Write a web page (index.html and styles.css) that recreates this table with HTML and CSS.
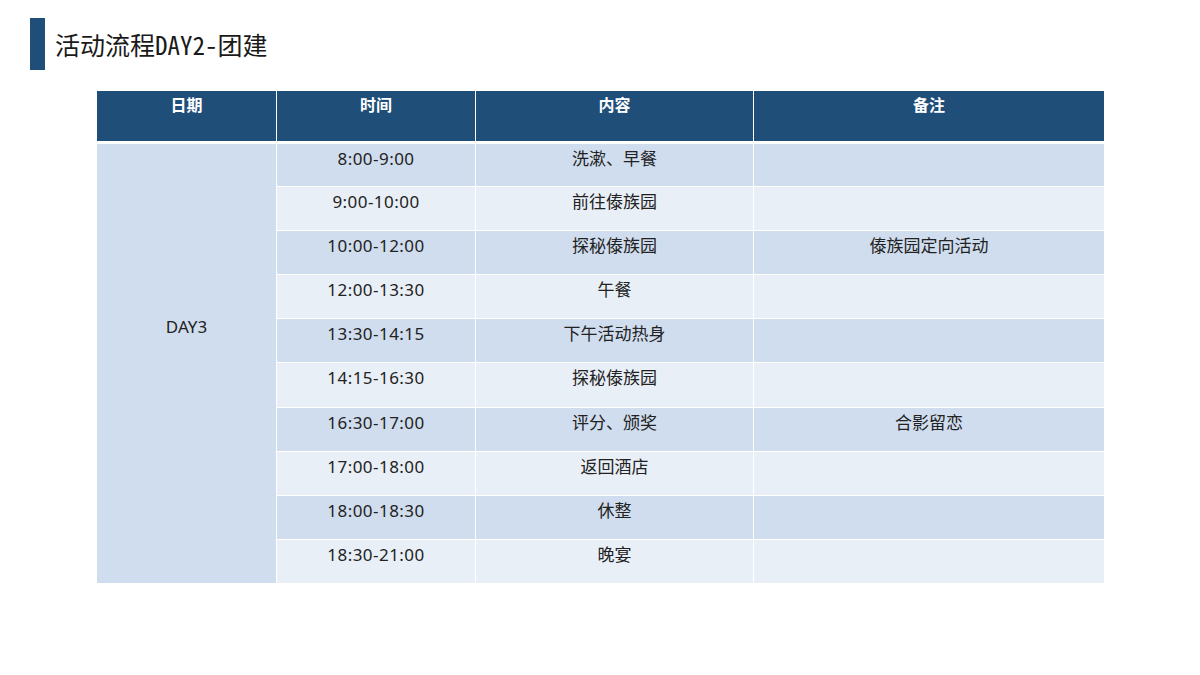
FILE: index.html
```html
<!DOCTYPE html>
<html lang="zh-CN">
<head>
<meta charset="utf-8">
<title>活动流程DAY2-团建</title>
<link rel="stylesheet" href="styles.css">
</head>
<body>
<div class="page">
  <header class="title-row">
    <div class="title-bar"></div>
    <h1 class="title">活动流程DAY2-团建</h1>
  </header>
  <table class="schedule">
    <colgroup>
      <col class="c1"><col class="c2"><col class="c3"><col class="c4">
    </colgroup>
    <thead>
      <tr><th>日期</th><th>时间</th><th>内容</th><th>备注</th></tr>
    </thead>
    <tbody>
      <tr class="odd"><td class="day" rowspan="10">DAY3</td><td class="time">8:00-9:00</td><td>洗漱、早餐</td><td></td></tr>
      <tr class="even"><td class="time">9:00-10:00</td><td>前往傣族园</td><td></td></tr>
      <tr class="odd"><td class="time">10:00-12:00</td><td>探秘傣族园</td><td>傣族园定向活动</td></tr>
      <tr class="even"><td class="time">12:00-13:30</td><td>午餐</td><td></td></tr>
      <tr class="odd"><td class="time">13:30-14:15</td><td>下午活动热身</td><td></td></tr>
      <tr class="even"><td class="time">14:15-16:30</td><td>探秘傣族园</td><td></td></tr>
      <tr class="odd"><td class="time">16:30-17:00</td><td>评分、颁奖</td><td>合影留恋</td></tr>
      <tr class="even"><td class="time">17:00-18:00</td><td>返回酒店</td><td></td></tr>
      <tr class="odd"><td class="time">18:00-18:30</td><td>休整</td><td></td></tr>
      <tr class="even"><td class="time">18:30-21:00</td><td>晚宴</td><td></td></tr>
    </tbody>
  </table>
</div>
</body>
</html>
```
FILE: styles.css
```css
* { box-sizing: border-box; }
html, body { margin: 0; padding: 0; background: #ffffff; }
body {
  width: 1200px;
  height: 675px;
  overflow: hidden;
  font-family: "Noto Sans", "Noto Sans CJK SC", sans-serif;
  color: #222222;
}
.page { padding: 18px 0 0 0; }
.title-row {
  display: flex;
  align-items: center;
  padding-left: 30px;
  height: 52px;
}
.title-bar {
  width: 15px;
  height: 52px;
  background: #1f4e79;
}
.title {
  margin: 0 0 0 10px;
  font-family: "Noto Sans Mono CJK SC", "Noto Sans CJK SC", monospace;
  font-weight: normal;
  font-size: 25px;
  line-height: 30px;
  color: #1a1a1a;
}
.schedule {
  margin: 21px 0 0 96px;
  width: 1008px;
  border-collapse: collapse;
  table-layout: fixed;
  font-size: 17px;
}
.c1 { width: 180px; }
.c2 { width: 199px; }
.c3 { width: 278px; }
.c4 { width: 351px; }
.schedule th {
  background: #1f4e79;
  color: #ffffff;
  font-weight: bold;
  font-size: 16px;
  line-height: 22px;
  height: 51px;
  padding: 3px 0 0 0;
  vertical-align: top;
  text-align: center;
  border-left: 1px solid #ffffff;
  border-right: 1px solid #ffffff;
  border-bottom: 3px solid #ffffff;
}
.schedule td {
  height: 44.2px;
  padding: 3px 0 0 0;
  line-height: 24px;
  vertical-align: top;
  text-align: center;
  border: 1px solid #ffffff;
}
.schedule td.time { letter-spacing: 0.45px; }
.schedule tr.odd td { background: #d0ddee; }
.schedule tr.even td { background: #e9eff7; }
.schedule td.day {
  background: #d0ddee;
  vertical-align: middle;
  padding: 0 0 73px 0;
}
```
